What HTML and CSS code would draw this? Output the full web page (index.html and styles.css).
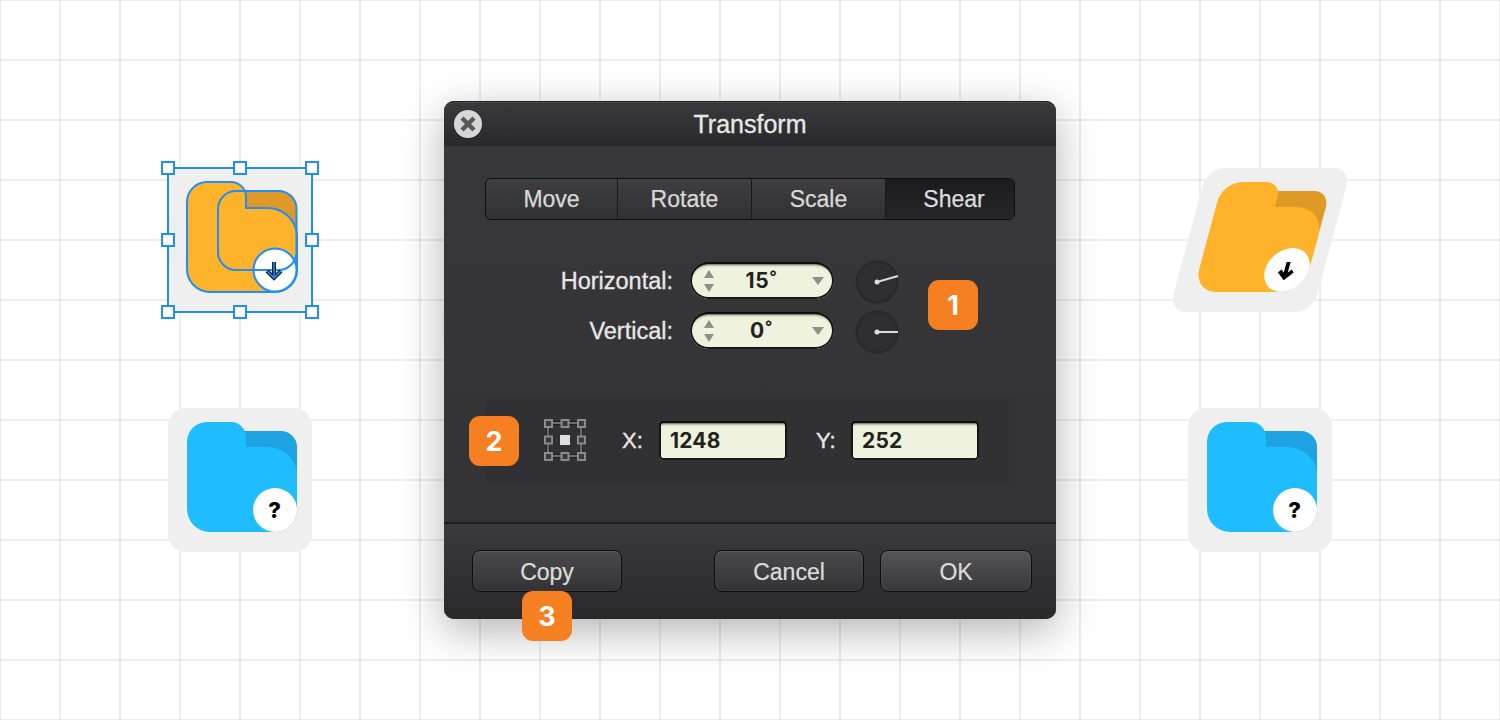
FILE: index.html
```html
<!DOCTYPE html>
<html lang="en">
<head>
<meta charset="utf-8">
<title>Transform</title>
<link rel="stylesheet" href="styles.css">
</head>
<body>
<svg class="icon icon-a" viewBox="0 0 144 144" width="144" height="144" aria-hidden="true">
  <rect class="plate" width="144" height="144" rx="18"/>
  <rect class="amber-back" x="50" y="23" width="78.500" height="79" rx="17"/>
  <path class="amber" d="M19 34a20 20 0 0 1 20-20h24a15 15 0 0 1 15 15v11h21a30 28 0 0 1 30 28v34a22 22 0 0 1-22 22h-65a23 23 0 0 1-23-23z"/>
  <path class="outline" d="M19 34a20 20 0 0 1 20-20h24a15 15 0 0 1 15 15v11h21a30 28 0 0 1 30 28v34a22 22 0 0 1-22 22h-65a23 23 0 0 1-23-23z"/>
  <circle class="disc-line" cx="107" cy="102" r="21.500"/>
  <rect class="outline" x="50" y="23" width="78.500" height="79" rx="18"/>
  <path class="arrow-dark" d="M106 94v15M99 103l7 7 7-7"/>
  <path class="arrow-blue" d="M106 94v15M99 103l7 7 7-7"/>
  <rect class="sel" width="144" height="144" rx="1"/>
  <rect class="handle" x="-6" y="-6" width="12" height="12"/>
  <rect class="handle" x="66" y="-6" width="12" height="12"/>
  <rect class="handle" x="138" y="-6" width="12" height="12"/>
  <rect class="handle" x="-6" y="66" width="12" height="12"/>
  <rect class="handle" x="138" y="66" width="12" height="12"/>
  <rect class="handle" x="-6" y="138" width="12" height="12"/>
  <rect class="handle" x="66" y="138" width="12" height="12"/>
  <rect class="handle" x="138" y="138" width="12" height="12"/>
</svg>

<svg class="icon icon-b" viewBox="0 0 144 144" width="144" height="144" aria-hidden="true">
  <rect class="plate" width="144" height="144" rx="18"/>
  <path class="blue-back" d="M70 23h43a16 16 0 0 1 16 16v50h-59z"/>
  <path class="blue" d="M19 34a20 20 0 0 1 20-20h24a15 15 0 0 1 15 15v10h21a30 28 0 0 1 30 28v35a22 22 0 0 1-22 22h-65a23 23 0 0 1-23-23z"/>
  <circle class="disc" cx="107" cy="102" r="22"/>
  <text class="mark" x="106.500" y="110">?</text>
</svg>

<svg class="icon icon-c" viewBox="0 0 144 144" width="144" height="144" aria-hidden="true">
  <rect class="plate" width="144" height="144" rx="18"/>
  <path class="amber-back" d="M70 23h43a16 16 0 0 1 16 16v50h-59z"/>
  <path class="amber" d="M19 34a20 20 0 0 1 20-20h24a15 15 0 0 1 15 15v10h21a30 28 0 0 1 30 28v35a22 22 0 0 1-22 22h-65a23 23 0 0 1-23-23z"/>
  <circle class="disc" cx="107" cy="102" r="22"/>
  <path class="arrow-black" d="M106.500 94v15M100 103l6.500 6.500 6.500-6.500"/>
</svg>

<svg class="icon icon-d" viewBox="0 0 144 144" width="144" height="144" aria-hidden="true">
  <rect class="plate" width="144" height="144" rx="18"/>
  <path class="blue-back" d="M70 23h43a16 16 0 0 1 16 16v50h-59z"/>
  <path class="blue" d="M19 34a20 20 0 0 1 20-20h24a15 15 0 0 1 15 15v10h21a30 28 0 0 1 30 28v35a22 22 0 0 1-22 22h-65a23 23 0 0 1-23-23z"/>
  <circle class="disc" cx="107" cy="102" r="22"/>
  <text class="mark" x="106.500" y="110">?</text>
</svg>

<main class="dialog">
  <header class="titlebar">
    <button class="close" aria-label="Close">
      <svg viewBox="0 0 28 28" width="28" height="28" aria-hidden="true"><path class="close-x" d="M8 8l12 12M20 8L8 20"/></svg>
    </button>
    <h1 class="title">Transform</h1>
  </header>

  <section class="content">
    <nav class="segments">
      <span class="segment">Move</span>
      <span class="segment">Rotate</span>
      <span class="segment">Scale</span>
      <span class="segment segment-active">Shear</span>
    </nav>

    <div class="rows">
      <span class="label">Horizontal:</span>
      <div class="pill">
        <svg class="stepper" viewBox="0 0 12 22" width="12" height="22" aria-hidden="true"><path d="M6 0l5 8H1zM6 22l-5-8h10z"/></svg>
        <span class="pill-value">15˚</span>
        <svg class="stepper" viewBox="0 0 12 8" width="12" height="8" aria-hidden="true"><path d="M0 0h12L6 8z"/></svg>
      </div>
      <svg class="knob" viewBox="0 0 44 44" width="44" height="44" aria-hidden="true">
        <circle class="knob-face" cx="22" cy="22" r="20.500"/>
        <path class="knob-hand" d="M22 22l21-6"/>
        <circle class="knob-dot" cx="22" cy="22" r="2.500"/>
      </svg>

      <span class="label">Vertical:</span>
      <div class="pill">
        <svg class="stepper" viewBox="0 0 12 22" width="12" height="22" aria-hidden="true"><path d="M6 0l5 8H1zM6 22l-5-8h10z"/></svg>
        <span class="pill-value">0˚</span>
        <svg class="stepper" viewBox="0 0 12 8" width="12" height="8" aria-hidden="true"><path d="M0 0h12L6 8z"/></svg>
      </div>
      <svg class="knob" viewBox="0 0 44 44" width="44" height="44" aria-hidden="true">
        <circle class="knob-face" cx="22" cy="22" r="20.500"/>
        <path class="knob-hand" d="M22 22h21"/>
        <circle class="knob-dot" cx="22" cy="22" r="2.500"/>
      </svg>
    </div>

    <div class="position">
      <svg class="anchor" viewBox="0 0 42 42" width="42" height="42" aria-hidden="true">
        <path class="anchor-shade" d="M1 4h40M1 21h6M35 21h6M1 37h40M4 1v40M37 1v40M21 1v6M21 35v6"/>
        <path class="anchor-link" d="M8 4h9M25 4h8M8 37h9M25 37h8M4 8v9M4 25v8M37 8v9M37 25v8"/>
        <rect class="anchor-box" x="1" y="1" width="7" height="7"/>
        <rect class="anchor-box" x="17.500" y="1" width="7" height="7"/>
        <rect class="anchor-box" x="34" y="1" width="7" height="7"/>
        <rect class="anchor-box" x="1" y="17.500" width="7" height="7"/>
        <rect class="anchor-box" x="34" y="17.500" width="7" height="7"/>
        <rect class="anchor-box" x="1" y="34" width="7" height="7"/>
        <rect class="anchor-box" x="17.500" y="34" width="7" height="7"/>
        <rect class="anchor-box" x="34" y="34" width="7" height="7"/>
        <rect class="anchor-core" x="16" y="16" width="10" height="10"/>
      </svg>
      <span class="axis axis-x">X:</span>
      <span class="field">1248</span>
      <span class="axis axis-y">Y:</span>
      <span class="field">252</span>
    </div>
  </section>

  <footer class="footer">
    <button class="btn btn-copy">Copy</button>
    <button class="btn">Cancel</button>
    <button class="btn btn-ok">OK</button>
  </footer>

  <span class="badge badge-1">1</span>
  <span class="badge badge-2">2</span>
  <span class="badge badge-3">3</span>
</main>
</body>
</html>
```
FILE: styles.css
```css
* { box-sizing: border-box; }

html, body { height: 100%; }

body {
  margin: 0;
  height: 720px;
  overflow: hidden;
  display: flex;
  align-items: center;
  justify-content: center;
  position: relative;
  font-family: "Liberation Sans", Arial, sans-serif;
  background-color: #fff;
  background-image:
    linear-gradient(90deg, rgba(0,0,0,.065) 2px, transparent 2px),
    linear-gradient(180deg, rgba(0,0,0,.065) 2px, transparent 2px);
  background-size: 60px 60px;
  background-position: -1px -1px;
}

/* icons on the canvas */
.icon { position: absolute; overflow: visible; }
.icon-a { left: 168px; top: 168px; }
.icon-b { left: 168px; top: 408px; }
.icon-c { left: 1188px; top: 168px; transform: skewX(-15deg); }
.icon-d { left: 1188px; top: 408px; }

.plate { fill: #efefef; }
.amber { fill: #ffb32a; }
.amber-back { fill: #df9926; }
.blue { fill: #1fbdff; }
.blue-back { fill: #1ea2e2; }
.disc { fill: #fff; }
.outline { fill: none; stroke: #1f8dfa; stroke-width: 2; }
.disc-line { fill: #fff; stroke: #1f8dfa; stroke-width: 2; }
.sel { fill: none; stroke: #1f8dfa; stroke-width: 2; }
.handle { fill: #fff; stroke: #1f8dfa; stroke-width: 2; }
.arrow-black { fill: none; stroke: #000; stroke-width: 4; stroke-linejoin: miter; }
.arrow-dark { fill: none; stroke: #16202b; stroke-width: 4; }
.arrow-blue { fill: none; stroke: #1f8dfa; stroke-width: 1.500; }
.mark {
  font-family: Inter, "Liberation Sans", sans-serif;
  font-weight: 800;
  font-size: 22px;
  fill: #000;
  text-anchor: middle;
}

/* dialog */
.dialog {
  position: relative;
  width: 612px;
  height: 518px;
  display: flex;
  flex-direction: column;
  border-radius: 10px;
  background: linear-gradient(#38383b, #323235);
  box-shadow: 0 12px 44px rgba(0,0,0,.3);
}

.titlebar {
  flex: none;
  height: 44px;
  display: grid;
  grid-template-columns: 28px 1fr 28px;
  align-items: center;
  padding: 0 10px;
  border-radius: 10px 10px 0 0;
  background: linear-gradient(#3a3a3d, #29292b);
  border-top: 1px solid #232325;
  box-shadow: inset 0 1px 0 #48484b, 0 1px 0 #28282a;
}

.close {
  width: 28px;
  height: 28px;
  padding: 0;
  border: 0;
  border-radius: 50%;
  background: #d6d6d6;
  display: block;
}
.close svg { display: block; }
.close-x { fill: none; stroke: #58585b; stroke-width: 4.500; }

.title {
  margin: 0;
  padding-top: 2px;
  text-align: center;
  font-size: 25px;
  font-weight: 400;
  color: #e8e8e8;
  -webkit-text-stroke: .3px #e8e8e8;
}

.content {
  flex: 1;
  padding: 33px 41px 0;
}

.segments {
  display: grid;
  grid-template-columns: 132px 134px 134px 1fr;
  height: 42px;
  border: 1px solid #0e0e10;
  border-radius: 6px;
  overflow: hidden;
  background: linear-gradient(#3f3f42, #313134);
}
.segment {
  display: flex;
  align-items: center;
  justify-content: center;
  font-size: 23px;
  color: #d9d9d9;
  border-right: 1px solid #19191b;
  -webkit-text-stroke: .25px #d9d9d9;
}
.segment:last-child { border-right: 0; }
.segment-active {
  padding-left: 8px;
  background: linear-gradient(#1c1c1e, #262628);
  color: #dedede;
}

.rows {
  margin-top: 42px;
  display: grid;
  grid-template-columns: 188px 144px 44px;
  grid-auto-rows: 37px;
  column-gap: 17px;
  row-gap: 13px;
  align-items: center;
}
.label {
  padding-top: 2px;
  text-align: right;
  font-size: 23.500px;
  color: #e8e8e8;
  -webkit-text-stroke: .3px #e8e8e8;
}

.pill {
  height: 37px;
  display: flex;
  align-items: center;
  justify-content: space-between;
  position: relative;
  padding: 0 10px 0 13px;
  border-radius: 19px;
  background: #eff2dc;
  box-shadow: inset 0 3px 2px -1px #0e0e0e, inset 0 0 0 2px #17171a, inset 0 5px 3px -2px #8c8c7e;
}
.pill-value {
  padding-right: 4px;
  font-family: Inter, "Liberation Sans", sans-serif;
  font-weight: 700;
  font-size: 21px;
  letter-spacing: .6px;
  color: #222;
}
.stepper { fill: #8f908a; display: block; }

.knob { margin: -2px 0 -5px 4px; display: block; align-self: center; overflow: visible; }
.knob-face { fill: #2e2e30; stroke: #28282a; stroke-width: 2; }
.knob-hand { stroke: #dcdcdc; stroke-width: 2; fill: none; }
.knob-dot { fill: #dcdcdc; }

.position {
  margin-top: 48px;
  height: 86px;
  display: flex;
  align-items: center;
  padding-left: 59px;
  border-radius: 8px;
  background: #313134;
}
.anchor { flex: none; display: block; }
.anchor-shade { stroke: #1b1b1d; stroke-width: 3.500; fill: none; }
.anchor-link { stroke: #8a8a8a; stroke-width: 1.500; fill: none; }
.anchor-box { fill: #3a3a3c; stroke: #8a8a8a; stroke-width: 2; }
.anchor-core { fill: #dedede; }

.axis {
  padding-top: 2px;
  font-size: 22px;
  font-weight: 400;
  color: #e8e8e8;
  flex: none;
  -webkit-text-stroke: .4px #e8e8e8;
}
.axis-x { margin-left: 36px; width: 37px; }
.axis-y { margin-left: 29px; width: 35px; }

.field {
  flex: none;
  width: 128px;
  height: 39px;
  display: flex;
  align-items: center;
  padding-left: 11px;
  border-radius: 4px;
  background: #eff2dc;
  box-shadow: inset 0 3px 2px -1px #0e0e0e, inset 0 0 0 2px #17171a, inset 0 5px 3px -2px #8c8c7e;
  font-family: Inter, "Liberation Sans", sans-serif;
  font-weight: 700;
  font-size: 21px;
  letter-spacing: .2px;
  color: #222;
}

.footer {
  flex: none;
  height: 97px;
  display: flex;
  align-items: flex-start;
  gap: 16px;
  padding: 26px 24px 0 28px;
  border-top: 2px solid #1e1e20;
  border-radius: 0 0 10px 10px;
  background: linear-gradient(#3a3a3d, #29292b);
}

.btn {
  width: 150px;
  height: 42px;
  padding: 2px 0 0;
  border: 1px solid #0e0e10;
  border-radius: 8px;
  background: linear-gradient(#4a4a4d, #333336);
  box-shadow: inset 0 1px 0 rgba(255,255,255,.06), inset 0 0 0 1px rgba(255,255,255,.03);
  font-family: inherit;
  font-size: 23px;
  color: #dcdcdc;
  -webkit-text-stroke: .2px #dcdcdc;
}
.btn-copy { margin-right: auto; }
.btn-ok { width: 152px; background: linear-gradient(#555558, #38383b); }

.badge {
  position: absolute;
  width: 50px;
  height: 50px;
  display: flex;
  align-items: center;
  justify-content: center;
  border-radius: 11px;
  background: #f67f22;
  color: #fff;
  font-family: Inter, "Liberation Sans", sans-serif;
  font-weight: 700;
  font-size: 27px;
}
.badge-1 { left: 484px; top: 179px; }
.badge-2 { left: 25px; top: 315px; }
.badge-3 { left: 78px; top: 490px; }
```
